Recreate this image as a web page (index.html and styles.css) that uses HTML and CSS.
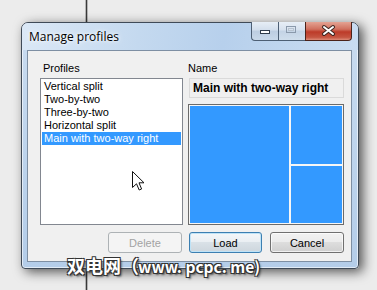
FILE: index.html
```html
<!DOCTYPE html>
<html lang="en">
<head>
  <meta charset="UTF-8" />
  <title>Manage profiles</title>
  <link rel="stylesheet" href="styles.css">
</head>
<body>
  <div class="desktop">
    <div class="line"></div>

    <div class="window">
      <div class="titlebar">
        <span class="title">Manage profiles</span>
        <div class="caption-buttons">
          <span class="cap min">
            <svg width="27" height="19" viewBox="0 0 27 19"><rect x="9.5" y="9.5" width="9" height="3" fill="#fff" stroke="#2e3b4a"/></svg>
          </span>
          <span class="cap max">
            <svg width="27" height="19" viewBox="0 0 27 19"><rect x="8.5" y="5.5" width="9" height="6" fill="none" stroke="#8a99ab"/><rect x="10.5" y="7.5" width="5" height="2" fill="none" stroke="#b7c3d0"/></svg>
          </span>
          <span class="cap close">
            <svg width="47" height="19" viewBox="0 0 47 19"><path d="M19 6 L28 13 M28 6 L19 13" stroke="#3a2520" stroke-width="4" stroke-linecap="round"/><path d="M19 6 L28 13 M28 6 L19 13" stroke="#fff" stroke-width="2" stroke-linecap="round"/></svg>
          </span>
        </div>
      </div>

      <div class="client">
        <div class="panes">
          <div class="pane">
            <div class="label">Profiles</div>
            <ul class="list">
              <li>Vertical split</li>
              <li>Two-by-two</li>
              <li>Three-by-two</li>
              <li>Horizontal split</li>
              <li class="selected">Main with two-way right</li>
              <svg class="cursor" width="13" height="20" viewBox="0 0 13 20"><path d="M0.5 0.5 L0.5 16.5 L4.5 12.8 L7.2 19 L9.6 18 L7 11.8 L12 11.8 Z" fill="#fff" stroke="#111" stroke-linejoin="round"/></svg>
            </ul>
          </div>
          <div class="pane">
            <div class="label">Name</div>
            <div class="name-box">Main with two-way right</div>
            <div class="preview">
              <div class="cell main"></div>
              <div class="cell"></div>
              <div class="cell"></div>
            </div>
          </div>
        </div>

        <div class="buttons">
          <button class="btn delete" disabled>Delete</button>
          <button class="btn load">Load</button>
          <button class="btn cancel">Cancel</button>
        </div>
      </div>
    </div>

    <div class="watermark">双电网（<span class="latin">www. pcpc. me)</span></div>
  </div>
</body>
</html>
```

FILE: styles.css
```css
body {
  margin: 0;
  background: #ececec;
  font-family: 'Liberation Sans', Arial, sans-serif;
}

.desktop {
  position: relative;
  width: 377px;
  height: 290px;
  padding: 22px 0 0 21px;
  box-sizing: border-box;
  overflow: hidden;
}

.line {
  position: absolute;
  left: 86px;
  top: 0;
  width: 1px;
  height: 290px;
  background: #3a3a3a;
  box-shadow: -1px 0 0 #b5b5b5, 1px 0 0 #b5b5b5;
}

.window {
  position: relative;
  width: 338px;
  height: 247px;
  box-sizing: border-box;
  border: 1px solid #3f4a57;
  border-radius: 7px 7px 4px 4px;
  background: linear-gradient(to bottom, #cadcf0, #bcd3ec 60%, #b4cde9);
  box-shadow: 4px 3px 12px rgba(0,0,0,0.65), inset 0 0 0 1px rgba(255,255,255,0.6);
}

.titlebar {
  display: flex;
  justify-content: space-between;
  height: 27px;
  border-radius: 6px 6px 0 0;
  background: linear-gradient(100deg, #dbe8f6 0%, #c4d9ef 35%, #b7d0ec 60%, #c9dcf1 100%);
}

.title {
  padding-left: 7px;
  line-height: 27px;
  font-family: 'Open Sans', 'Noto Sans', sans-serif;
  font-size: 12px;
  color: #000;
  text-shadow: 0 0 6px #fff, 0 0 3px #fff;
}

.caption-buttons {
  display: flex;
  margin: -1px 6px 0 0;
  height: 19px;
}

.cap {
  display: block;
  height: 19px;
  box-sizing: border-box;
  border: 1px solid #4d5f74;
  border-top: none;
}

.cap svg {
  display: block;
  margin: -1px 0 0 -1px;
}

.min {
  width: 27px;
  border-radius: 0 0 0 4px;
  border-right: none;
  background: linear-gradient(to bottom, #e7eef6, #d2deec 45%, #bccde1 50%, #c9d9ea);
}

.max {
  width: 27px;
  border-right: none;
  background: linear-gradient(to bottom, #e7eef6, #d6e1ee 45%, #c3d3e5 50%, #d0deec);
}

.close {
  width: 47px;
  border-color: #4b2219;
  border-radius: 0 0 4px 0;
  background: linear-gradient(to bottom, #e4a393, #d0705e 40%, #bd3b29 55%, #c55541 85%, #dd8b78);
}

.client {
  margin: 0 6px 6px 5px;
  height: 212px;
  box-sizing: border-box;
  border: 1px solid #7e8fa3;
  background: #f0f0f0;
  font-size: 11px;
  color: #000;
}

.panes {
  display: grid;
  grid-template-columns: 143px 156px;
  column-gap: 5px;
  padding: 11px 7px 0 12px;
}

.label {
  height: 13px;
  line-height: 13px;
  margin: 0 0 3px 3px;
}

.pane:last-child .label {
  margin-left: 0;
}

.list {
  position: relative;
  list-style: none;
  margin: 0;
  padding: 1px;
  height: 147px;
  box-sizing: border-box;
  border: 1px solid #828790;
  background: #fff;
}

.list li {
  height: 13px;
  line-height: 13px;
  padding: 0 2px;
  white-space: nowrap;
}

.list li.selected {
  background: #3399ff;
  color: #fff;
}

.cursor {
  position: absolute;
  left: 91px;
  top: 92px;
}

.name-box {
  height: 20px;
  box-sizing: border-box;
  margin: 0 0 6px 1px;
  padding-left: 3px;
  line-height: 18px;
  border: 1px solid #dadada;
  background: #f0f0f0;
  font-weight: bold;
  font-size: 12px;
}

.preview {
  display: grid;
  grid-template-columns: 99px 1fr;
  grid-template-rows: 1fr 1fr;
  gap: 2px;
  height: 121px;
  box-sizing: border-box;
  padding: 1px;
  border: 1px solid #6b6b6b;
  background: #f6f6f6;
}

.cell {
  background: #3399ff;
}

.cell.main {
  grid-row: 1 / 3;
}

.buttons {
  display: flex;
  justify-content: flex-end;
  margin-top: 7px;
  padding-right: 7px;
}

.btn {
  height: 21px;
  padding: 0;
  font-family: 'Liberation Sans', Arial, sans-serif;
  font-size: 11px;
  color: #000;
  border: 1px solid #707070;
  border-radius: 3px;
  background: linear-gradient(to bottom, #f2f2f2, #ebebeb 50%, #dddddd 50%, #cfcfcf);
  box-shadow: inset 0 0 0 1px rgba(255,255,255,0.7);
}

.delete {
  width: 74px;
  color: #a3a3a3;
  border-color: #adb2b5;
  background: #f4f4f4;
  box-shadow: none;
}

.load {
  width: 73px;
  margin-left: 7px;
  border-color: #3c7fb1;
  background: linear-gradient(to bottom, #f4f7f9, #e9eef2 50%, #d9e1e7 50%, #cdd6dd);
  box-shadow: inset 0 0 0 1px #bfe3f7;
}

.cancel {
  width: 74px;
  margin-left: 8px;
}

.watermark {
  position: absolute;
  left: 67px;
  top: 254px;
  font-family: 'Noto Sans CJK SC', 'Liberation Sans', sans-serif;
  font-size: 18px;
  font-weight: bold;
  line-height: 22px;
  color: #fff;
  text-shadow: 1px 1px 0 #333, -1px -1px 0 #333, 1px -1px 0 #333, -1px 1px 0 #333, 2px 2px 2px rgba(0,0,0,0.5);
}

.watermark .latin {
  font-size: 15.5px;
  margin-left: -1px;
}
```
